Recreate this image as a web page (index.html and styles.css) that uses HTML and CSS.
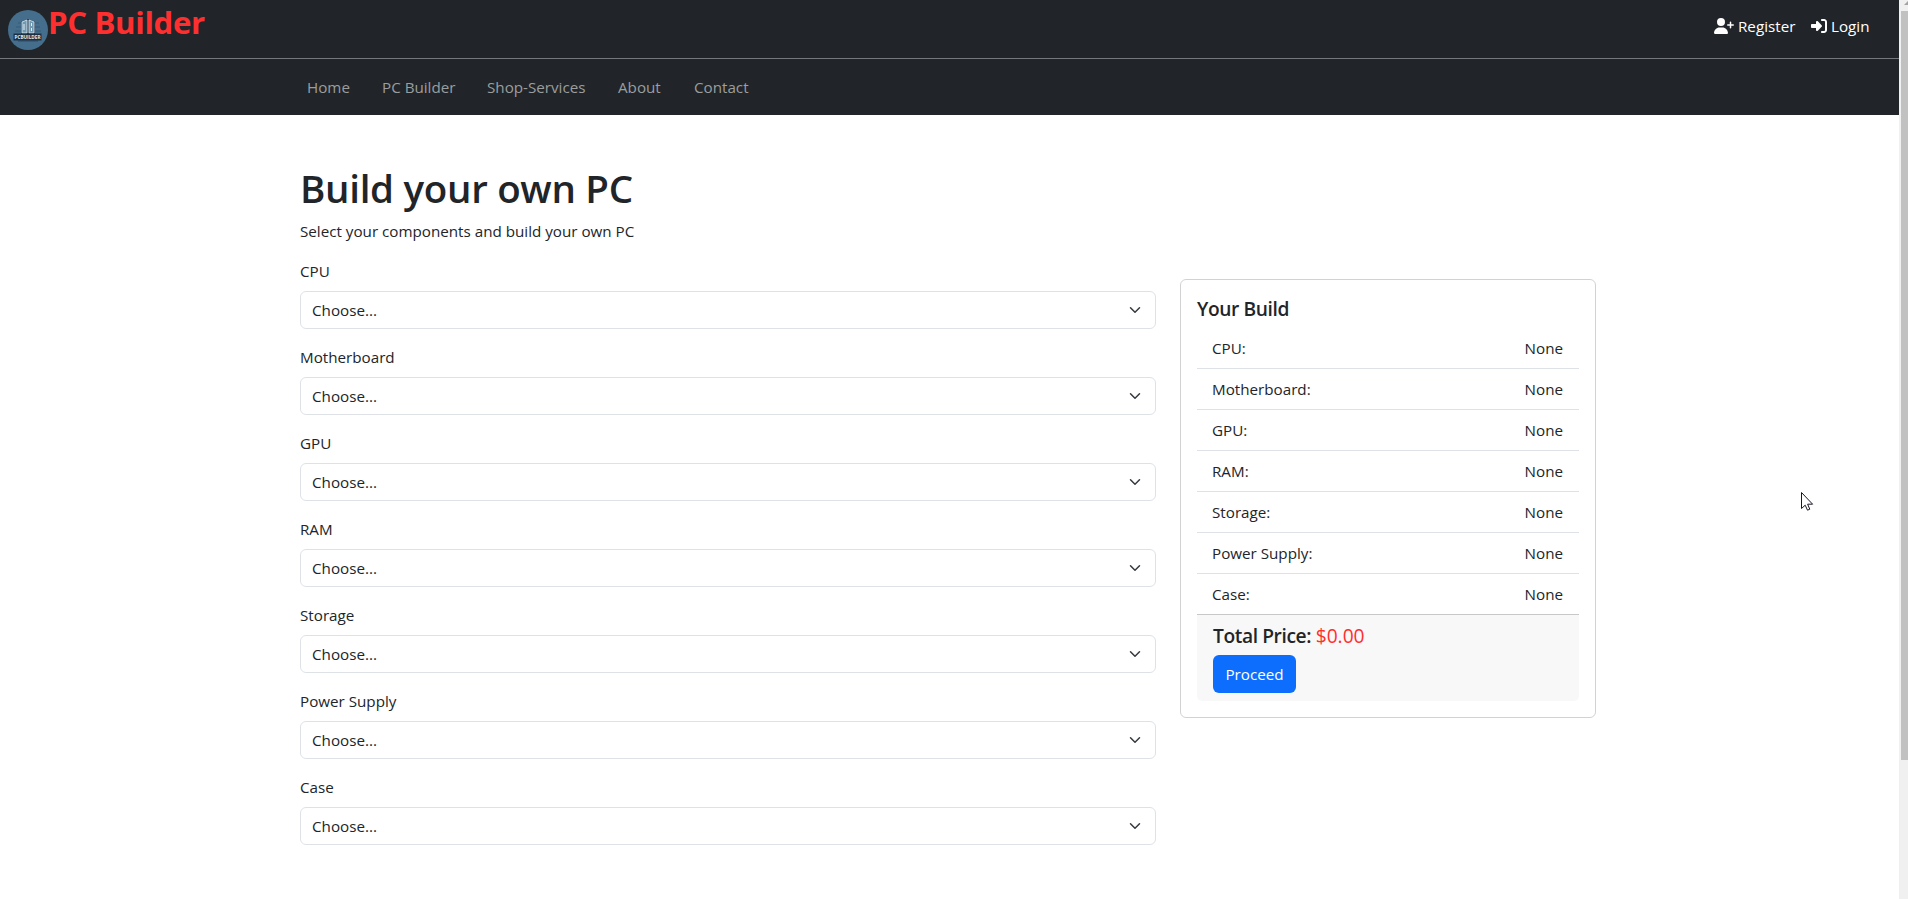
FILE: index.html
```
<!DOCTYPE html>
<html lang="en">
<head>
<meta charset="utf-8">
<title>PC Builder</title>
<link rel="stylesheet" href="styles.css">
</head>
<body>
<div class="page">
  <header class="topbar">
    <a class="brand">
      <svg class="logo" viewBox="0 0 40 40">
        <circle cx="20" cy="20" r="20" fill="#446e8c"/>
        <path d="M8 17h24M7 21h26M10 13h4M27 13h4" stroke="#365a75" stroke-width="1"/>
        <path d="M13 12l7-3 7 3v12H13z" fill="#23394e"/>
        <path d="M14 12l5-2v13h-5zM21 10l5 2v11h-5z" fill="#6f98b3" stroke="#d5e3ea" stroke-width=".9"/>
        <path d="M16 14v6M23.500 13v3M23.500 18v3" stroke="#e6eef2" stroke-width="1"/>
        <path d="M10 31h20" stroke="#2d4c65" stroke-width="1"/>
        <rect x="5.500" y="23.500" width="28" height="7" fill="#1c3044"/>
        <text x="19.500" y="29.300" text-anchor="middle" textLength="26" lengthAdjust="spacingAndGlyphs" class="logo-text">PCBUILDER</text>
      </svg>
      <span class="brand-name">PC Builder</span>
    </a>
    <div class="account">
      <a class="account-link register">
        <svg width="20" height="16" viewBox="0 0 640 512" fill="#fff"><path d="M96 128a128 128 0 1 1 256 0A128 128 0 1 1 96 128zM0 482.300C0 383.800 79.800 304 178.300 304h91.400C368.200 304 448 383.800 448 482.300c0 16.400-13.300 29.700-29.700 29.700H29.700C13.300 512 0 498.700 0 482.300zM504 312V248H440c-13.300 0-24-10.700-24-24s10.700-24 24-24h64V136c0-13.300 10.700-24 24-24s24 10.700 24 24v64h64c13.300 0 24 10.700 24 24s-10.700 24-24 24H552v64c0 13.300-10.700 24-24 24s-24-10.700-24-24z"/></svg>
        <span>Register</span>
      </a>
      <a class="account-link login">
        <svg width="16" height="16" viewBox="0 0 512 512" fill="#fff"><path d="M217.900 105.900L340.700 228.700c7.200 7.200 11.300 17.100 11.300 27.300s-4.100 20.100-11.300 27.300L217.900 406.100c-6.400 6.400-15 9.900-24 9.900c-18.700 0-33.900-15.200-33.900-33.900l0-62.100L32 320c-17.700 0-32-14.300-32-32l0-64c0-17.700 14.300-32 32-32l128 0 0-62.100c0-18.700 15.200-33.900 33.900-33.900c9 0 17.600 3.600 24 9.900zM352 416l64 0c17.700 0 32-14.300 32-32l0-256c0-17.700-14.300-32-32-32l-64 0c-17.700 0-32-14.300-32-32s14.300-32 32-32l64 0c53 0 96 43 96 96l0 256c0 53-43 96-96 96l-64 0c-17.700 0-32-14.300-32-32s14.300-32 32-32z"/></svg>
        <span>Login</span>
      </a>
    </div>
  </header>
  <nav class="mainnav">
    <a class="nav-home">Home</a><a class="nav-builder">PC Builder</a><a class="nav-shop">Shop-Services</a><a class="nav-about">About</a><a>Contact</a>
  </nav>
  <main class="container">
    <h1>Build your own PC</h1>
    <p class="lead">Select your components and build your own PC</p>
    <div class="row">
      <form class="parts">
        <div class="field"><label>CPU</label><div class="select"><span>Choose...</span><svg class="chevron" viewBox="0 0 16 16"><path d="m2 5 6 6 6-6"/></svg></div></div>
        <div class="field"><label>Motherboard</label><div class="select"><span>Choose...</span><svg class="chevron" viewBox="0 0 16 16"><path d="m2 5 6 6 6-6"/></svg></div></div>
        <div class="field"><label>GPU</label><div class="select"><span>Choose...</span><svg class="chevron" viewBox="0 0 16 16"><path d="m2 5 6 6 6-6"/></svg></div></div>
        <div class="field"><label>RAM</label><div class="select"><span>Choose...</span><svg class="chevron" viewBox="0 0 16 16"><path d="m2 5 6 6 6-6"/></svg></div></div>
        <div class="field"><label>Storage</label><div class="select"><span>Choose...</span><svg class="chevron" viewBox="0 0 16 16"><path d="m2 5 6 6 6-6"/></svg></div></div>
        <div class="field"><label>Power Supply</label><div class="select"><span>Choose...</span><svg class="chevron" viewBox="0 0 16 16"><path d="m2 5 6 6 6-6"/></svg></div></div>
        <div class="field"><label>Case</label><div class="select"><span>Choose...</span><svg class="chevron" viewBox="0 0 16 16"><path d="m2 5 6 6 6-6"/></svg></div></div>
      </form>
      <aside class="card">
        <h5>Your Build</h5>
        <ul class="list">
          <li><span>CPU:</span><span>None</span></li>
          <li><span>Motherboard:</span><span>None</span></li>
          <li><span>GPU:</span><span>None</span></li>
          <li><span>RAM:</span><span>None</span></li>
          <li><span>Storage:</span><span>None</span></li>
          <li><span>Power Supply:</span><span>None</span></li>
          <li><span>Case:</span><span>None</span></li>
        </ul>
        <div class="card-footer">
          <h5>Total Price: <span class="price">$0.00</span></h5>
          <button class="btn" type="button">Proceed</button>
        </div>
      </aside>
    </div>
  </main>
</div>
<div class="scrollbar"><svg class="scroll-arrow" width="9" height="11" viewBox="0 0 9 11"><path d="M5 5 9 1V5z" fill="#a3a3a3"/></svg><div class="thumb"></div></div>
<svg class="cursor" width="13" height="20" viewBox="0 0 13 20"><path d="M.5.5v16l3.700-3.300 2.300 5 2.300-1-2.200-5h5z" fill="#fff" stroke="#1b1626" stroke-width="1"/></svg>
</body>
</html>
```
FILE: styles.css
```
* { box-sizing: border-box; }
body {
  margin: 0;
  height: 899px;
  display: flex;
  overflow: hidden;
  position: relative;
  background: #fff;
  color: #212529;
  font: 400 15.2px/24px "Open Sans", "Noto Sans", sans-serif;
}
.page { width: 1899px; flex: none; }
.topbar {
  height: 59px;
  display: flex;
  justify-content: space-between;
  background: #212529;
  border-bottom: 1px solid #75787b;
}
.brand { display: flex; padding: 10px 0 0 8px; }
.logo { width: 40px; height: 40px; }
.logo-text { font: 700 6px "Open Sans", sans-serif; fill: #e2eef3; }
.brand-name {
  margin-top: -8px;
  font-size: 31.200px;
  font-weight: 700;
  line-height: 40px;
  letter-spacing: -.35px;
  color: #ff2f2f;
}
.account { display: flex; padding-top: 14px; color: #fff; }
.account-link { display: flex; gap: 4px; height: 24px; align-items: center; }
.register { width: 97px; }
.login { width: 88px; }
.mainnav {
  height: 56px;
  padding: 16px 0 0 307px;
  display: flex;
  background: #212529;
  color: #9b9d9e;
}
.nav-home { width: 75px; }
.nav-builder { width: 105px; }
.nav-shop { width: 131px; }
.nav-about { width: 76px; }
.container { width: 1320px; margin-left: 288px; padding: 48px 12px 0; }
h1 {
  margin: 0 0 8px;
  padding-top: 2px;
  font-size: 38.500px;
  font-weight: 600;
  line-height: 46px;
  letter-spacing: -.3px;
}
.lead { margin: 0 0 16px; }
.row { display: flex; gap: 24px; align-items: flex-start; }
.parts { width: 856px; }
.field { margin-bottom: 16px; }
.field label { display: block; margin-bottom: 8px; }
.select {
  height: 38px;
  padding: 0 12px 0 11px;
  display: flex;
  align-items: center;
  justify-content: space-between;
  border: 1px solid #dee2e6;
  border-radius: 6px;
}
.chevron { width: 16px; height: 12px; fill: none; stroke: #343a40; stroke-width: 2; stroke-linecap: round; stroke-linejoin: round; }
.card {
  width: 416px;
  margin-top: 20px;
  padding: 16px;
  border: 1px solid rgba(0, 0, 0, .175);
  border-radius: 6px;
}
h5 {
  margin: 0 0 8px;
  padding-top: 1px;
  font-size: 19.200px;
  font-weight: 600;
  line-height: 23px;
  letter-spacing: -.4px;
}
.list { margin: 0; padding: 0; list-style: none; }
.list li {
  height: 41px;
  padding: 8px 16px 8px 15px;
  display: flex;
  justify-content: space-between;
  border-bottom: 1px solid #dee2e6;
}
.list li:last-child { height: 40px; border-bottom: 0; }
.card-footer {
  padding: 8px 16px;
  border-top: 1px solid #c8c8c8;
  border-radius: 0 0 5px 5px;
  background: #f8f8f8;
}
.price { font-weight: 400; letter-spacing: 0; color: #ff2f2f; }
.btn {
  display: block;
  width: 83px;
  height: 38px;
  padding: 0;
  border: 0;
  border-radius: 6px;
  background: #0d6efd;
  color: #fff;
  font: inherit;
}
.scrollbar { width: 9px; background: #f0f0f0; }
.scroll-arrow { display: block; }
.thumb { height: 749px; margin-left: 2px; background: #c1c1c1; }
.cursor { position: absolute; left: 1801px; top: 492px; }
```
